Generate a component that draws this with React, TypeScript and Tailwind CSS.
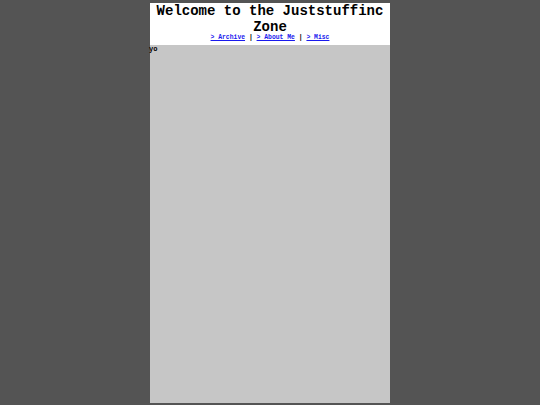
export default function App() {
  return (
    <div className="h-[405px] w-[540px] overflow-hidden bg-[#545454] pt-[3px]">
      <div className="mx-auto flex h-[400px] w-[240px] flex-col bg-[#c6c6c6] font-['Courier_New','Liberation_Mono',monospace]">
        <header className="bg-white pb-[4px] text-center">
          <h1 className="text-[14px] font-bold leading-[16px] text-black">Welcome to the Juststuffinc Zone</h1>
          <nav className="-mt-[1px] text-[6.4px] font-bold leading-[7px]">
            <a href="#" className="text-[#1a1aee] underline">&gt; Archive</a>
            <span> | </span>
            <a href="#" className="text-[#1a1aee] underline"> &gt; About Me</a>
            <span> | </span>
            <a href="#" className="text-[#1a1aee] underline"> &gt; Misc</a>
          </nav>
        </header>
        <main className="flex-1">
          <p className="-ml-[1px] text-[7px] font-bold leading-[8px] text-black">yo</p>
        </main>
      </div>
    </div>
  )
}
